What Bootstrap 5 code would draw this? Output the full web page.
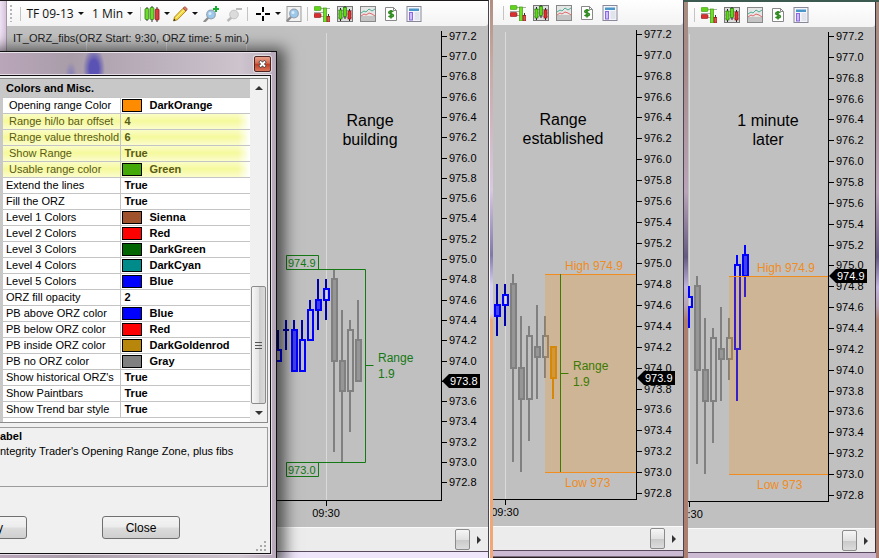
<!DOCTYPE html>
<html lang="en">
<head>
<meta charset="utf-8">
<meta name="viewport" content="width=device-width, initial-scale=1">
<title>Opening range zone charts</title>
<link href="https://cdn.jsdelivr.net/npm/bootstrap@5.3.0/dist/css/bootstrap.min.css" rel="stylesheet">
<style>
body{font-family:"Liberation Sans",Arial,sans-serif;font-size:11px;line-height:15px;color:#000;background:#d9cfe6}
.desk{min-height:100vh}
.win{border-right:1px solid #4a4450;border-top:1px solid #1d1a1c}
.win-a{padding:0 0 6px 7px;background:linear-gradient(90deg,#efe2f4 0,#d5c3d9 6px,#6b6470 7px,#efe6fb 8px)}
.win-b{border-top:0;border-left:1px solid #fff;padding:0 0 7px 3px;background:linear-gradient(#cbbad2 0 5px,#2a2024 6px) right bottom/calc(100% - 3px) 7px no-repeat,linear-gradient(#b08f80,#c6a7a2 60px,#d8c8e0 190px,#8078a8 255px,#d8d0f0 285px,#d8d0f0 314px,#f0a878 320px)}
.win-c{border-top:2px solid #3d5a50;border-right:0;padding:0 4px 5px 4px;background:linear-gradient(#cbbad2,#cbbad2) 4px bottom/calc(100% - 8px) 5px no-repeat,linear-gradient(#a98d80,#a58a88 60px,#b9a4b8 190px,#655a80 255px,#c0b4dc 285px,#b4a0b0 305px,#ac7e70 318px)}
.pane{background:#c0c0c0;border-bottom:1px solid #5a4a60}
.win-c .pane{border-right:1px solid #3b3038}
.tools{height:25px;background:linear-gradient(#fff,#f3f3f3);border-radius:0 0 3px 0;font-family:"Open Sans","Noto Sans",sans-serif;font-size:12px}
.tools .btn{--bs-btn-padding-x:0;--bs-btn-padding-y:0;--bs-btn-border-width:0;--bs-btn-font-size:12px;--bs-btn-color:#111;--bs-btn-line-height:16px;height:24px;display:flex;align-items:center;justify-content:center;gap:4px;flex:none}
.w23{width:23px}.w28{width:28px}.w51{width:51px}.w64{width:64px}
.tools svg{flex:none}
.caret{width:0;height:0;border:3px solid transparent;border-top-color:#111;border-bottom-width:0}
.vsep{width:1px;height:14px;background:#c4c4c4;margin:0 2px;flex:none}
.grip{width:2px;height:17px;margin:0 6px 0 3px;background:repeating-linear-gradient(#b5b5b5 0 2px,transparent 2px 4px);flex:none}
.plot svg{display:block;flex:none}
.hbar{height:24px;background:#ececec;border-top:1px solid #fafafa}
.thumb{border:1px solid #8b8b8b;border-radius:2px;background:linear-gradient(#f6f6f6,#e2e2e2 50%,#c9c9c9 52%,#dcdcdc);padding:0}
.hbar .thumb{width:15px;height:21px}
.arrow-r{border:0;background:none;padding:0;width:18px;display:flex;justify-content:center}
.arrow-r::before{content:"";border:4px solid transparent;border-left-color:#333;border-right-width:0}
/* dialog floating over the first chart, partly beyond the left edge */
.dlg{top:51px;left:-60px;bottom:0;width:337px;border:1px solid #111;border-bottom:0;padding:0 5px 4px 0;box-shadow:3px 2px 14px 5px rgba(0,0,0,.6);
background:radial-gradient(ellipse 11px 22px at 153px 17px,#5a52b4 40%,transparent),radial-gradient(ellipse 6px 12px at 130px 22px,#8c84b4 20%,transparent),linear-gradient(90deg,#b9a6b9 60px,#a99da9 130px,#cdc4ce 300px,#b8a9ba)}
.dlg-title{height:23px;border-top:1px solid #e9e2ea}
.x-btn{width:17px;height:16px;border:1px solid #4e2424;border-radius:2px;padding:0;background:linear-gradient(#e9a08c,#d66a50 45%,#c03a20 50%,#d8765c);box-shadow:0 0 0 1px #ddd}
.dlg-body{background:#f0f0f0;border:1px solid #111;padding:2px 2px 0 0;outline:1px solid #e6dde8}
.propbox{border:1px solid #8a8a8a;background:#fff;height:345px}
.gutter{width:60px;background:#c8c8c8}
.props{flex:1;table-layout:fixed;border-collapse:collapse}
.props th,.props td{height:16px;padding:0 0 0 3px;line-height:15px;border-bottom:1px solid #c4c4c4;white-space:nowrap;overflow:hidden;font-weight:400}
.props thead th{background:#c8c8c8;font-weight:700;height:18px;padding-top:2px}
.props tbody th{width:117px;border-right:1px solid #c4c4c4}
.props tbody td{font-weight:700;padding-left:4px}
.props .sub th{padding-left:6px}
.props .hot{background:linear-gradient(90deg,transparent 95%,#fff),linear-gradient(#fbfdcc,#f5f99c 50%,#fbfdcc);color:#5a5a18}
.swatch{display:inline-block;width:20px;height:13px;border:1px solid #000;vertical-align:top;margin:1px 8px 0 -3px}
.vbar{width:17px;background:#f0f0f0}
.vbar .thumb{height:118px;width:15px;background:linear-gradient(90deg,#f7f7f7,#e4e4e4 50%,#cdcdcd 55%,#dadada)}
.arr{border:0;background:none;padding:0;height:18px;display:flex;align-items:center;justify-content:center}
.arr::before{content:"";border:4px solid transparent}
.arr.up::before{border-bottom-color:#333;border-top-width:0}
.arr.dn::before{border-top-color:#333;border-bottom-width:0}
.lines{width:7px;height:7px;background:repeating-linear-gradient(#555 0 1px,transparent 1px 3px)}
.desc{border:1px solid #9c9c9c;margin-top:4px;height:60px;padding:1px 0 0 57px;overflow:hidden;white-space:nowrap}
.dlg-btn{width:78px;height:23px;border:1px solid #707070;border-radius:3px;padding:0;font-size:12px;line-height:20px;background:linear-gradient(#f4f4f4,#ececec 48%,#dcdcdc 52%,#cfcfcf);color:#000}
.acts{gap:75px;padding:29px 0 0 7px}
.sizer{color:#aaa}
</style>
<script src="https://cdn.jsdelivr.net/npm/bootstrap@5.3.0/dist/js/bootstrap.bundle.min.js"></script>
</head>
<body>
<svg width="0" height="0" class="position-absolute" aria-hidden="true">
<symbol id="i-depth" viewBox="0 0 16 16"><path d="M4 2.5h12M0 6.5h12M4 10.5h12" stroke="#aaa"/><rect x="0" y="0.5" width="7" height="4" rx="1" fill="#62d21c" stroke="#3c9a10" stroke-width=".6"/><rect x="0" y="7.5" width="7" height="4" rx="1" fill="#d83030" stroke="#8e1818" stroke-width=".6"/><rect x="9.5" y="2" width="3" height="14" fill="#6ee020" stroke="#3c9a10" stroke-width=".7"/><path d="M14.5 8v3" stroke="#333"/><rect x="13" y="10.5" width="3" height="5.5" fill="#e05050" stroke="#8e1818" stroke-width=".7"/></symbol>
<symbol id="i-bars" viewBox="0 0 16 16"><rect x=".5" y=".5" width="15" height="15" fill="#ddd" stroke="#777"/><path d="M1 4.5h14M1 8h14M1 11.5h14" stroke="#aaa"/><path d="M3.5 2v13M8 0v13M12.5 3v12" stroke="#222"/><rect x="2" y="4" width="3" height="9" fill="#5fd816" stroke="#267c08" stroke-width=".7"/><rect x="6.5" y="1.500" width="3" height="9" fill="#5fd816" stroke="#267c08" stroke-width=".7"/><rect x="11" y="5" width="3" height="8" fill="#e03030" stroke="#8c1414" stroke-width=".7"/></symbol>
<symbol id="i-lines" viewBox="0 0 16 16"><rect x=".5" y=".5" width="15" height="15" fill="#c4c4c4" stroke="#888"/><path d="M1 1h14v9H1z" fill="#e6e6e6"/><path d="M1 7l3-2 2 1 3-3 3 2 3-2" fill="none" stroke="#4cae94"/><path d="M1 10l3-2 2 1 3-2 3 1 3 2" fill="none" stroke="#e06a6a"/></symbol>
<symbol id="i-money" viewBox="0 0 16 16"><path d="M2.500 1.500h8l3 3v10h-11z" fill="#fff" stroke="#888"/><path d="M10.500 1.500v3h3" fill="none" stroke="#888"/><path d="M10.300 5.800c-1-1.100-4.500-1.200-4.500.6 0 2 4.600 1 4.600 3.100 0 1.700-3.600 1.700-4.800.4M8 4v8.500" fill="none" stroke="#2f8a20" stroke-width="1.700"/></symbol>
<symbol id="i-layout" viewBox="0 0 16 16"><rect x="1" y=".5" width="14" height="15" fill="#f5f6fb" stroke="#889"/><rect x="3" y="2.500" width="10" height="2.500" fill="#4a96c8"/><rect x="3.500" y="6.500" width="3" height="7.500" fill="#cdbcff" stroke="#8a68e0"/><path d="M8.500 7h5M8.500 9h5M8.500 11h5M8.500 13h5" stroke="#ccd2dc"/></symbol>
<symbol id="i-candles" viewBox="0 0 16 16"><path d="M3 1v14M8 0v16M13 1v15" stroke="#333"/><g stroke-width=".8"><rect x="1" y="2.500" width="3.800" height="11" rx="1" fill="#6edc2a" stroke="#2b7a10"/><rect x="6.100" y="1.500" width="3.800" height="12" rx="1" fill="#6edc2a" stroke="#2b7a10"/><rect x="11.200" y="3" width="3.800" height="11" rx="1" fill="#d84040" stroke="#8c1414"/></g></symbol>
<symbol id="i-pencil" viewBox="0 0 16 16"><path d="M1.500 15l1-4L11 2.200l3 2.800-8.500 8.700z" fill="#f4d63a" stroke="#a07818" stroke-width=".8"/><path d="M11 2.200l1.300-1.200c1-.6 3.200 1.400 2.700 2.700L14 5z" fill="#e07868" stroke="#94483c" stroke-width=".8"/><path d="M1.500 15l.6-2.300 1.600 1.600z" fill="#222"/><path d="M4 12l8-8" stroke="#fff3a0"/></symbol>
<symbol id="i-lens" viewBox="0 0 16 16"><path d="M5.500 10.500L1.500 14.500" stroke="#8d8d8d" stroke-width="2.400" stroke-linecap="round"/><circle cx="8" cy="7.500" r="4.300" fill="#9cc8ec" stroke="#94a4b4" stroke-width="1.200"/><circle cx="7" cy="6.500" r="1.500" fill="#d9edfb"/></symbol>
<symbol id="i-zoomin" viewBox="0 0 16 16"><use href="#i-lens" y="1"/><path d="M13 0v6M10 3h6" stroke="#18b030" stroke-width="2"/></symbol>
<symbol id="i-zoomout" viewBox="0 0 16 16"><g opacity=".8"><path d="M5.500 11.500L1.500 15" stroke="#aaa" stroke-width="2.400"/><circle cx="8" cy="8.500" r="4.300" fill="#d4d4d4" stroke="#b4b4b4"/></g><path d="M10 3h6" stroke="#bbb" stroke-width="2"/></symbol>
<symbol id="i-cross" viewBox="0 0 16 16"><path d="M8 1v5M8 10v5M1 8h5M10 8h5" stroke="#000" stroke-width="2"/></symbol>
<symbol id="i-find" viewBox="0 0 16 16"><rect x="1" y=".5" width="14" height="15" fill="#f2f2f2" stroke="#999"/><use href="#i-lens" x="0" y="0"/></symbol>
</svg>

<main class="desk d-flex position-relative overflow-hidden">
  <section class="win win-a d-flex flex-column flex-fill">
    <div class="pane d-flex flex-column flex-fill">
      <div class="tools d-flex align-items-center overflow-hidden">
        <span class="grip"></span><span class="vsep"></span>
        <button class="btn w64" type="button">TF 09-13 <i class="caret"></i></button>
        <button class="btn w51" type="button">1 Min <i class="caret"></i></button>
        <span class="vsep"></span>
        <button class="btn w28" type="button" aria-label="Bar style"><svg width="16" height="16"><use href="#i-candles"/></svg><i class="caret"></i></button>
        <button class="btn w28" type="button" aria-label="Draw"><svg width="16" height="16"><use href="#i-pencil"/></svg><i class="caret"></i></button>
        <button class="btn w23" type="button" aria-label="Zoom in"><svg width="16" height="16"><use href="#i-zoomin"/></svg></button>
        <button class="btn w23" type="button" aria-label="Zoom out"><svg width="16" height="16"><use href="#i-zoomout"/></svg></button>
        <span class="vsep"></span>
        <button class="btn w28 ms-1" type="button" aria-label="Cursor"><svg width="16" height="16"><use href="#i-cross"/></svg><i class="caret"></i></button>
        <button class="btn w23" type="button" aria-label="Find"><svg width="16" height="16"><use href="#i-find"/></svg></button>
        <span class="d-flex align-items-center" data-tools></span>
      </div>
      <div class="plot flex-fill d-flex justify-content-end overflow-hidden" data-chart="a"></div>
      <div class="hbar d-flex justify-content-end align-items-center"><button class="thumb" type="button" aria-label="Scroll"></button><button class="arrow-r" type="button" aria-label="Right"></button></div>
    </div>
  </section>
  <section class="win win-b d-flex flex-column">
    <div class="pane d-flex flex-column flex-fill">
      <div class="tools d-flex align-items-center ps-2" data-tools></div>
      <div class="plot flex-fill" data-chart="b"></div>
      <div class="hbar d-flex justify-content-end align-items-center"><button class="thumb" type="button" aria-label="Scroll"></button><button class="arrow-r" type="button" aria-label="Right"></button></div>
    </div>
  </section>
  <section class="win win-c d-flex flex-column">
    <div class="pane d-flex flex-column flex-fill">
      <div class="tools d-flex align-items-center ps-1" data-tools></div>
      <div class="plot flex-fill" data-chart="c"></div>
      <div class="hbar d-flex justify-content-end align-items-center"><button class="thumb" type="button" aria-label="Scroll"></button><button class="arrow-r" type="button" aria-label="Right"></button></div>
    </div>
  </section>

  <section class="dlg position-absolute d-flex flex-column" role="dialog" aria-label="Indicators">
    <div class="dlg-title d-flex justify-content-end align-items-center"><button class="x-btn d-flex align-items-center justify-content-center" type="button" aria-label="Close window"><svg width="9" height="8" viewBox="0 0 9 8"><path d="M1.500 1l6 6M7.500 1l-6 6" stroke="#444" stroke-width="3.200"/><path d="M2 1.500l5 5M7 1.500l-5 5" stroke="#fff" stroke-width="1.800"/></svg></button></div>
    <div class="dlg-body flex-fill d-flex flex-column">
      <div class="propbox d-flex align-items-stretch">
        <div class="gutter"></div>
        <div class="flex-fill d-flex align-items-start">
          <table class="props">
            <thead><tr><th colspan="2" scope="colgroup">Colors and Misc.</th></tr></thead>
            <tbody id="props"></tbody>
          </table>
        </div>
        <div class="vbar d-flex flex-column">
          <button class="arr up" type="button" aria-label="Up"></button>
          <button class="thumb mt-auto mx-auto d-flex align-items-center justify-content-center" type="button" aria-label="Scroll list"><span class="lines"></span></button>
          <button class="arr dn" type="button" aria-label="Down"></button>
        </div>
      </div>
      <div class="desc"><b>abel</b><br>ntegrity Trader's Opening Range Zone, plus fibs</div>
      <div class="acts d-flex"><button class="dlg-btn" type="button">Apply</button><button class="dlg-btn" type="button">Close</button></div>
      <svg class="sizer mt-auto ms-auto" width="12" height="12" viewBox="0 0 12 12"><path d="M8 0h2v2H8zM4 4h2v2H4zM8 4h2v2H8zM0 8h2v2H0zM4 8h2v2H4zM8 8h2v2H8z" fill="currentColor"/></svg>
    </div>
  </section>
</main>

<script>
document.querySelectorAll('[data-tools]').forEach(el => {
  el.innerHTML = '<span class="vsep"></span>' + ['depth:Depth','bars:Data series','lines:Indicators','money:Strategies','layout:Properties'].map(s => {
    const [id, label] = s.split(':');
    return `<button class="btn w23" type="button" aria-label="${label}"><svg width="16" height="16"><use href="#i-${id}"/></svg></button>`;
  }).join('');
});

/* name, value, swatch colour, row classes */
const props = [
  ['Opening range Color','DarkOrange','darkorange','sub'],
  ['Range hi/lo bar offset','4','','sub hot'],
  ['Range value threshold','6','','sub hot'],
  ['Show Range','True','','sub hot'],
  ['Usable range color','Green','#44a808','sub hot'],
  ['Extend the lines','True'],['Fill the ORZ','True'],
  ['Level 1 Colors','Sienna','sienna'],['Level 2 Colors','Red','red'],
  ['Level 3 Colors','DarkGreen','darkgreen'],['Level 4 Colors','DarkCyan','darkcyan'],
  ['Level 5 Colors','Blue','blue'],['ORZ fill opacity','2'],
  ['PB above ORZ color','Blue','blue'],['PB below ORZ color','Red','red'],
  ['PB inside ORZ color','DarkGoldenrod','darkgoldenrod'],['PB no ORZ color','Gray','gray'],
  ["Show historical ORZ's",'True'],['Show Paintbars','True'],['Show Trend bar style','True']
];
document.getElementById('props').innerHTML = props.map(([n, v, c, k]) =>
  `<tr class="${k || ''}"><th scope="row">${n}</th><td>${c ? `<span class="swatch" style="background:${c}"></span>` : ''}${v}</td></tr>`).join('');

/* candle: high, low, body top, body bottom, filled, colour */
const B = '#0000ff', G = '#808080', O = '#c8860b';
const candles = [
  [974.3,974.0,974.1,974.0,0,B],[974.4,974.1,974.3,974.3,0,B],[974.4,973.9,974.3,973.9,1,B],
  [974.4,973.9,974.2,973.9,0,B],[974.6,974.2,974.5,974.2,0,B],[974.8,974.3,974.6,974.5,1,B],
  [974.8,974.4,974.7,974.6,0,B],[974.9,973.1,974.8,974.0,1,G],[974.5,973.0,974.0,973.7,1,G],
  [974.4,973.3,974.3,973.7,0,G],[974.6,973.8,974.2,973.8,1,G]
];
const later = candles.slice(0, 10).concat([[974.6,973.7,974.2,974.1,1,G],[974.5,973.9,974.3,974.1,0,G]]);
const charts = {
  a:{w:481,axis:434,base:436,step:101.5,x0:271,set:candles,grid:[79,159,239,319],time:319,last:973.8,note:['Range','building'],nx:363,ny:100,wick:'#0000a8'},
  b:{w:190,axis:143,base:447,step:104.3,x0:4,set:later.slice(5).concat([[974.2,973.7,974.2,973.9,1,O]]),grid:[12],time:12,last:973.9,note:['Range','established'],nx:70,ny:100,zone:52,hx:72,wick:'#0000a8'},
  c:{w:187,axis:140,base:447,step:104.3,x0:1,set:later.slice(6).concat([[975.1,973.7,975.0,974.2,0,B],[975.2,974.7,975.1,974.9,1,B]]),grid:[1],time:1,last:974.9,note:['1 minute','later'],nx:80,ny:99,zone:41,hx:69,wick:B}
};
const t = (x, y, s, size, fill = '#000', anchor = 'start') => `<text x="${x}" y="${y}" font-size="${size}" fill="${fill}" text-anchor="${anchor}">${s}</text>`;
const r = (x, y, w, h, f, more = '') => `<rect x="${x}" y="${y}" width="${w}" height="${h}" fill="${f}" ${more}/>`;
for (const [key, c] of Object.entries(charts)) {
  const y = p => Math.round(c.base - (p - 973) * c.step);
  let s = c.grid.map(x => r(x, 7, 1, 467, '#d9d9d9')).join('');
  c.set.forEach(([hi, lo, top, bot, fill, col], i) => {
    const x = c.x0 + i * 8, wc = col === B ? c.wick : col;
    s += r(x - 1, y(hi), 2, y(top) - y(hi), wc) + r(x - 1, y(bot), 2, y(lo) - y(bot), wc);
    s += top === bot ? r(x - 3, y(top) - 1, 6, 2, wc)
      : r(x - 2, y(top), 5, y(bot) - y(top), fill ? col : 'none', `fill-opacity=".65" stroke="${col}" stroke-width="2"`);
  });
  if (c.zone) {
    const w = c.axis - c.zone;
    s += r(c.zone, y(974.9), w, y(973) - y(974.9), 'darkorange', 'fill-opacity=".22"')
      + r(c.zone, y(974.9), w, 1, '#f08c20') + r(c.zone, y(973), w, 1, '#f08c20')
      + t(c.hx, y(974.9) - 4, 'High 974.9', 12, '#f08c20') + t(c.hx, y(973) + 15, 'Low 973', 12, '#f08c20');
  }
  if (key === 'a') {
    s += `<path d="M279.500 243.500v-14h32v14M279.500 243.500h79v193h-79v14h32v-14M358.500 339.500h8" fill="none" stroke="#147814"/>`
      + t(281, 241, '974.9', 11, '#147814') + t(281, 448, '973.0', 11, '#147814')
      + t(371, 336, 'Range', 12, '#147814') + t(371, 352, '1.9', 12, '#147814')
      + t(6, 16, 'IT_ORZ_fibs(ORZ Start: 9:30, ORZ time: 5 min.)', 11, '#222');
  }
  if (key === 'b') s += `<path d="M67.500 249v198M67.500 348.500h8" fill="none" stroke="#3c7a00"/>` + t(80, 345, 'Range', 12, '#3c7a00') + t(80, 361, '1.9', 12, '#3c7a00');
  s += r(0, 474, c.axis + 1, 1, '#000') + r(c.axis, 5, 1, 470, '#000') + r(c.time, 474, 1, 6, '#000') + t(c.time, 491, '09:30', 11, '#000', 'middle');
  for (let k = -1; k <= 21; k++) {
    const p = 973 + k * .2;
    s += r(c.axis, y(p), 6, 1, '#000') + t(c.axis + 8, y(p) + 4, p.toFixed(1), 11);
  }
  const ly = y(c.last);
  s += `<path d="M${c.axis + 1} ${ly}l7 -7h31v14h-31z" fill="#000"/>` + t(c.axis + 9, ly + 4, c.last, 11, '#fff');
  s += t(c.nx, c.ny, c.note[0], 16, '#000', 'middle') + t(c.nx, c.ny + 19, c.note[1], 16, '#000', 'middle');
  document.querySelector(`[data-chart=${key}]`).innerHTML = `<svg width="${c.w}" height="501" role="img" aria-label="Price chart">${s}</svg>`;
}
</script>
</body>
</html>
